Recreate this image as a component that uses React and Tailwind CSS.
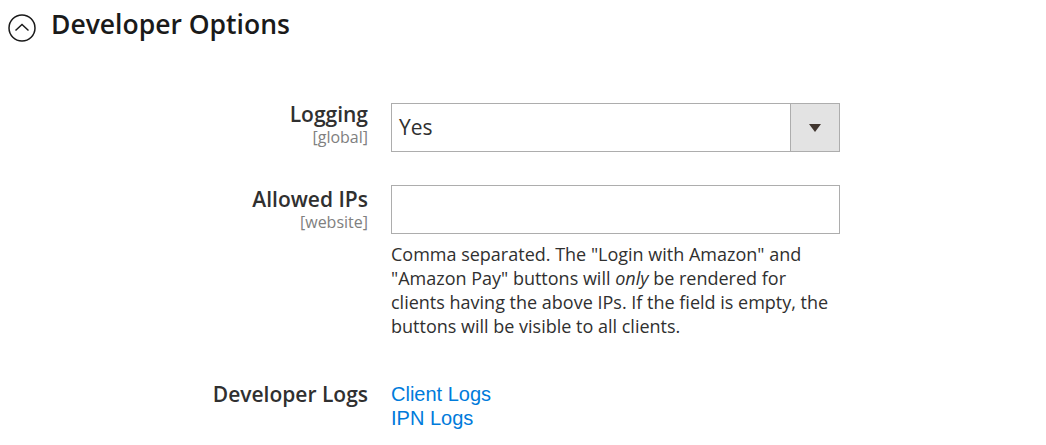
export default function App() {
  return (
    <div className="w-[1046px] h-[445px] bg-white overflow-hidden font-['Open_Sans',sans-serif] text-[#303030]">
      <div className="flex items-center gap-[15px] pl-[8px] pt-[6px]">
        <svg width="28" height="28" viewBox="0 0 28 28" className="mt-[8px]">
          <circle cx="14" cy="14" r="13" fill="none" stroke="#1a1a1a" strokeWidth="1.5" />
          <path d="M7.5 16.5 L14 10.5 L20.5 16.5" fill="none" stroke="#1a1a1a" strokeWidth="1.5" />
        </svg>
        <h2 className="text-[26.5px] font-semibold text-[#1a1a1a] leading-[36px]">Developer Options</h2>
      </div>

      <div className="mt-[61px] grid grid-cols-[368px_449px] gap-x-[23px]">
        <div className="text-right">
          <div className="text-[21px] font-semibold leading-[22px]">Logging</div>
          <div className="text-[16px] text-[#808080] leading-[24px]">[global]</div>
        </div>
        <div className="h-[49px] border border-[#adadad] flex">
          <div className="flex-1 pl-[7px] text-[21px] leading-[47px] text-[#303030]">Yes</div>
          <div className="w-[49px] bg-[#e3e3e3] border-l border-[#adadad] flex items-center justify-center">
            <svg width="12" height="8" viewBox="0 0 12 8">
              <path d="M0 0 H12 L6 8 Z" fill="#41362f" />
            </svg>
          </div>
        </div>

        <div className="text-right pt-[3px] mt-[33px]">
          <div className="text-[21px] font-semibold leading-[22px]">Allowed IPs</div>
          <div className="text-[16px] text-[#808080] leading-[24px]">[website]</div>
        </div>
        <div className="mt-[33px]">
          <div className="h-[49px] border border-[#adadad]"></div>
          <p className="mt-[8px] text-[18px] leading-[24px] text-[#303030]">
            Comma separated. The "Login with Amazon" and "Amazon Pay" buttons will <em>only</em> be rendered for clients having the above IPs. If the field is empty, the buttons will be visible to all clients.
          </p>
        </div>

        <div className="text-right mt-[44px]">
          <div className="text-[21px] font-semibold leading-[24px]">Developer Logs</div>
        </div>
        <div className="mt-[44px] flex flex-col items-start font-['Liberation_Sans',Arial,sans-serif] text-[20px] leading-[24px] text-[#007bdb]">
          <a href="#" className="text-[#007bdb]">Client Logs</a>
          <a href="#" className="text-[#007bdb]">IPN Logs</a>
        </div>
      </div>
    </div>
  );
}
